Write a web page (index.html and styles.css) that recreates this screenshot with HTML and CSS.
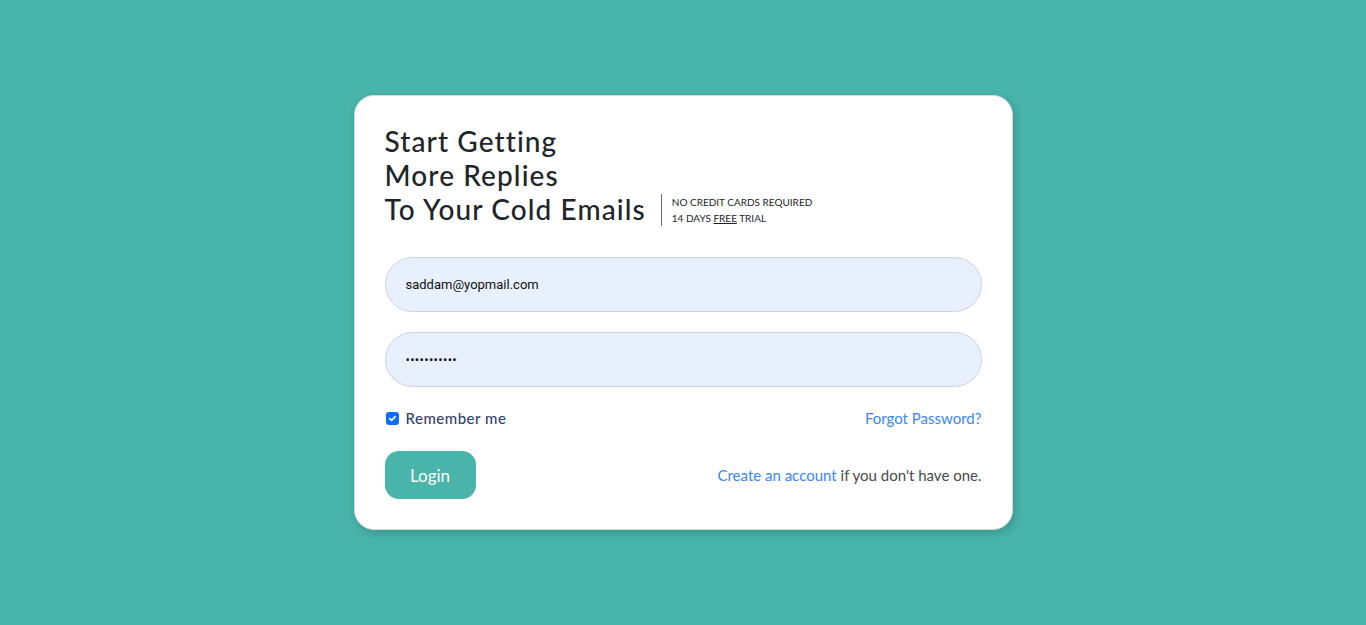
FILE: index.html
```html
<!DOCTYPE html>
<html>
<head>
<meta charset="utf-8">
<link rel="stylesheet" href="styles.css">
</head>
<body>
<main class="page">
  <section class="card">
    <div class="head">
      <h1 class="title">Start Getting<br>More Replies<br>To Your Cold Emails</h1>
      <div class="note">
        <div>NO CREDIT CARDS REQUIRED</div>
        <div>14 DAYS <u>FREE</u> TRIAL</div>
      </div>
    </div>
    <form class="form">
      <input class="field" type="email" value="saddam@yopmail.com">
      <input class="field pw" type="text" value="•••••••••••">
      <div class="row">
        <label class="remember">
          <span class="check"><svg width="9" height="9" viewBox="0 0 10 10"><path d="M2 5.2 L4.1 7.2 L8 2.8" fill="none" stroke="#fff" stroke-width="1.8" stroke-linecap="round" stroke-linejoin="round"/></svg></span>
          Remember me
        </label>
        <a class="link" href="#">Forgot Password?</a>
      </div>
      <div class="row bottom">
        <button class="btn" type="button">Login</button>
        <p class="create"><a class="link" href="#">Create an account</a> if you don't have one.</p>
      </div>
    </form>
  </section>
</main>
</body>
</html>
```
FILE: styles.css
```css
* { box-sizing: border-box; }
html, body { margin: 0; height: 100%; }
body {
  background: #48b4aa;
  font-family: "Lato", "Open Sans", sans-serif;
}
.page {
  height: 625px;
  display: flex;
  align-items: center;
  justify-content: center;
}
.card {
  width: 659px;
  height: 435px;
  background: #fff;
  border-radius: 20px;
  border: 1px solid #d8dcdc;
  box-shadow: 2px 3px 8px rgba(0,0,0,0.18);
  padding: 28px 30px 30px 30px;
}
.head {
  display: flex;
  align-items: flex-end;
  gap: 15px;
}
.title {
  margin: 0;
  font-size: 28px;
  font-weight: 500;
  line-height: 34px;
  color: #212529;
  letter-spacing: 1.1px;
}
.note {
  border-left: 1px solid #6c6c6c;
  padding-left: 10px;
  margin-bottom: 0px;
  font-size: 10px;
  line-height: 16px;
  color: #212529;
}
.form {
  margin-top: 31px;
  display: flex;
  flex-direction: column;
}
.field {
  width: 597px;
  height: 55px;
  border: 1px solid #cdd3dc;
  border-radius: 28px;
  background: #e8f0fe;
  padding: 0 20px;
  font-family: "Roboto", sans-serif;
  font-size: 13px;
  color: #111;
  margin-bottom: 20px;
  outline: none;
}
.pw { font-size: 13px; letter-spacing: 0.3px; }
.row {
  display: flex;
  justify-content: space-between;
  align-items: center;
}
.form > .row:first-of-type { margin-top: 2px; }
.remember {
  display: flex;
  align-items: center;
  gap: 7px;
  font-size: 15px;
  color: #33416b;
  font-weight: 500;
  letter-spacing: 0.5px;
  margin-left: 1px;
}
.check {
  width: 13px;
  height: 13px;
  border-radius: 3px;
  background: #0d6efd;
  display: flex;
  align-items: center;
  justify-content: center;
}
.link {
  color: #3a86f7;
  text-decoration: none;
  font-size: 15px;
}
.bottom { margin-top: 24px; }
.btn {
  width: 91px;
  height: 48px;
  border: none;
  border-radius: 14px;
  background: #48b4aa;
  color: #fff;
  font-family: inherit;
  font-size: 17px;
}
.create {
  margin: 0;
  font-size: 15px;
  color: #4a4a4a;
}
```
